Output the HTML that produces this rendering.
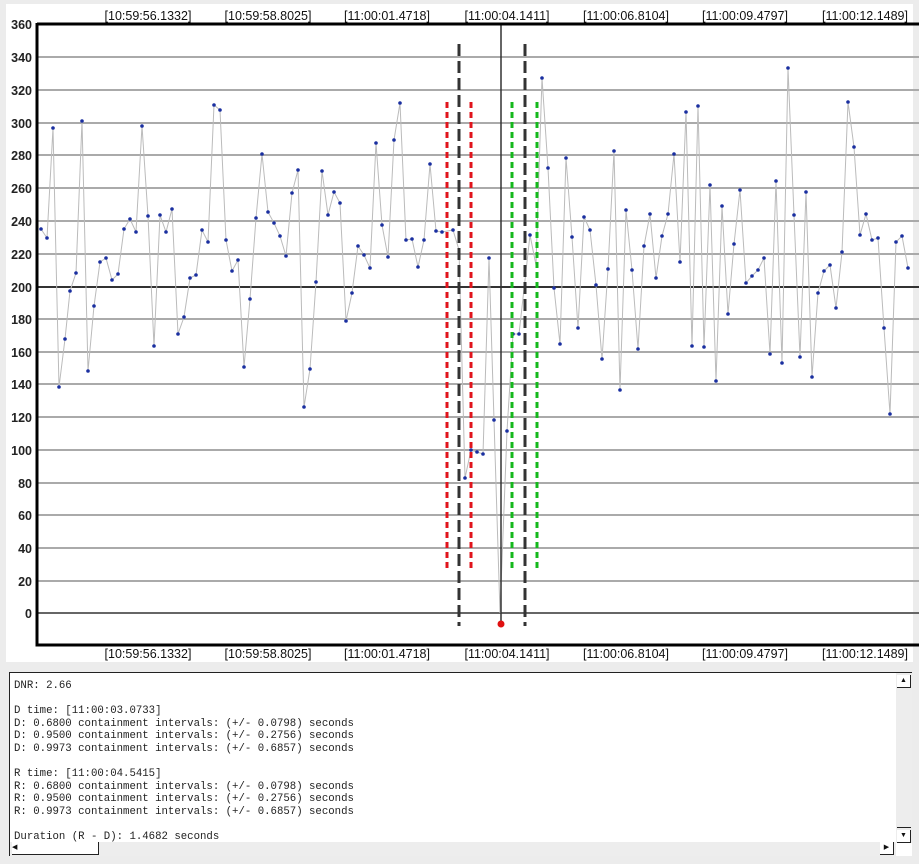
<!DOCTYPE html>
<html><head><meta charset="utf-8"><style>
body{margin:0;width:919px;height:864px;background:#ececec;overflow:hidden;position:relative;font-family:"Liberation Sans",sans-serif}
#chart{position:absolute;left:0;top:0}
#panel{position:absolute;left:9px;top:672px;width:903px;height:184px;background:#fff;border-top:1.5px solid #222;border-left:1.5px solid #222;box-sizing:border-box}
#txt{position:absolute;left:4px;top:7px;font-family:"Liberation Mono",monospace;font-size:10.7px;line-height:12.6px;white-space:pre;color:#222}
.vs{position:absolute;right:0;top:0;width:16px;height:170px;background:#ededed}
.hs{position:absolute;left:0;bottom:0;width:886px;height:14px;background:#ededed}
.btn{position:absolute;width:13px;height:12px;background:#fff;border-right:1.5px solid #222;border-bottom:1.5px solid #222;font-size:7px;line-height:12px;text-align:center;color:#111}
</style></head><body>
<svg id="chart" width="919" height="664" xmlns="http://www.w3.org/2000/svg">
<rect x="6" y="4" width="907" height="658" fill="#fff"/>
<g stroke="#aaa" stroke-width="2">
<line x1="37" x2="919" y1="57" y2="57"/><line x1="37" x2="919" y1="90" y2="90"/><line x1="37" x2="919" y1="123" y2="123"/><line x1="37" x2="919" y1="155" y2="155"/><line x1="37" x2="919" y1="188" y2="188"/><line x1="37" x2="919" y1="221" y2="221"/><line x1="37" x2="919" y1="254" y2="254"/><line x1="37" x2="919" y1="319" y2="319"/><line x1="37" x2="919" y1="352" y2="352"/><line x1="37" x2="919" y1="384" y2="384"/><line x1="37" x2="919" y1="417" y2="417"/><line x1="37" x2="919" y1="450" y2="450"/><line x1="37" x2="919" y1="483" y2="483"/><line x1="37" x2="919" y1="515" y2="515"/><line x1="37" x2="919" y1="548" y2="548"/><line x1="37" x2="919" y1="581" y2="581"/>
</g>
<line x1="37" x2="919" y1="287" y2="287" stroke="#333" stroke-width="2"/>
<line x1="37" x2="919" y1="613" y2="613" stroke="#666" stroke-width="2"/>
<polyline fill="none" stroke="#bbb" stroke-width="1" points="41,229 47,238 53,128 59,387 65,339 70,291 76,273 82,121 88,371 94,306 100,262 106,258 112,280 118,274 124,229 130,219 136,232 142,126 148,216 154,346 160,215 166,232 172,209 178,334 184,317 190,278 196,275 202,230 208,242 214,105 220,110 226,240 232,271 238,260 244,367 250,299 256,218 262,154 268,212 274,223 280,236 286,256 292,193 298,170 304,407 310,369 316,282 322,171 328,215 334,192 340,203 346,321 352,293 358,246 364,255 370,268 376,143 382,225 388,257 394,140 400,103 406,240 412,239 418,267 424,240 430,164 436,231 442,232 453,230 459,250 465,478 471,450 477,452 483,454 489,258 494,420 500,613 507,431 513,334 519,334 530,235 536,265 542,78 548,168 554,288 560,344 566,158 572,237 578,328 584,217 590,230 596,285 602,359 608,269 614,151 620,390 626,210 632,270 638,349 644,246 650,214 656,278 662,236 668,214 674,154 680,262 686,112 692,346 698,106 704,347 710,185 716,381 722,206 728,314 734,244 740,190 746,283 752,276 758,270 764,258 770,354 776,181 782,363 788,68 794,215 800,357 806,192 812,377 818,293 824,271 830,265 836,308 842,252 848,102 854,147 860,235 866,214 872,240 878,238 884,328 890,414 896,242 902,236 908,268"/>
<g fill="#1a2fa0">
<circle cx="41" cy="229" r="1.8"/><circle cx="47" cy="238" r="1.8"/><circle cx="53" cy="128" r="1.8"/><circle cx="59" cy="387" r="1.8"/><circle cx="65" cy="339" r="1.8"/><circle cx="70" cy="291" r="1.8"/><circle cx="76" cy="273" r="1.8"/><circle cx="82" cy="121" r="1.8"/><circle cx="88" cy="371" r="1.8"/><circle cx="94" cy="306" r="1.8"/><circle cx="100" cy="262" r="1.8"/><circle cx="106" cy="258" r="1.8"/><circle cx="112" cy="280" r="1.8"/><circle cx="118" cy="274" r="1.8"/><circle cx="124" cy="229" r="1.8"/><circle cx="130" cy="219" r="1.8"/><circle cx="136" cy="232" r="1.8"/><circle cx="142" cy="126" r="1.8"/><circle cx="148" cy="216" r="1.8"/><circle cx="154" cy="346" r="1.8"/><circle cx="160" cy="215" r="1.8"/><circle cx="166" cy="232" r="1.8"/><circle cx="172" cy="209" r="1.8"/><circle cx="178" cy="334" r="1.8"/><circle cx="184" cy="317" r="1.8"/><circle cx="190" cy="278" r="1.8"/><circle cx="196" cy="275" r="1.8"/><circle cx="202" cy="230" r="1.8"/><circle cx="208" cy="242" r="1.8"/><circle cx="214" cy="105" r="1.8"/><circle cx="220" cy="110" r="1.8"/><circle cx="226" cy="240" r="1.8"/><circle cx="232" cy="271" r="1.8"/><circle cx="238" cy="260" r="1.8"/><circle cx="244" cy="367" r="1.8"/><circle cx="250" cy="299" r="1.8"/><circle cx="256" cy="218" r="1.8"/><circle cx="262" cy="154" r="1.8"/><circle cx="268" cy="212" r="1.8"/><circle cx="274" cy="223" r="1.8"/><circle cx="280" cy="236" r="1.8"/><circle cx="286" cy="256" r="1.8"/><circle cx="292" cy="193" r="1.8"/><circle cx="298" cy="170" r="1.8"/><circle cx="304" cy="407" r="1.8"/><circle cx="310" cy="369" r="1.8"/><circle cx="316" cy="282" r="1.8"/><circle cx="322" cy="171" r="1.8"/><circle cx="328" cy="215" r="1.8"/><circle cx="334" cy="192" r="1.8"/><circle cx="340" cy="203" r="1.8"/><circle cx="346" cy="321" r="1.8"/><circle cx="352" cy="293" r="1.8"/><circle cx="358" cy="246" r="1.8"/><circle cx="364" cy="255" r="1.8"/><circle cx="370" cy="268" r="1.8"/><circle cx="376" cy="143" r="1.8"/><circle cx="382" cy="225" r="1.8"/><circle cx="388" cy="257" r="1.8"/><circle cx="394" cy="140" r="1.8"/><circle cx="400" cy="103" r="1.8"/><circle cx="406" cy="240" r="1.8"/><circle cx="412" cy="239" r="1.8"/><circle cx="418" cy="267" r="1.8"/><circle cx="424" cy="240" r="1.8"/><circle cx="430" cy="164" r="1.8"/><circle cx="436" cy="231" r="1.8"/><circle cx="442" cy="232" r="1.8"/><circle cx="453" cy="230" r="1.8"/><circle cx="465" cy="478" r="1.8"/><circle cx="471" cy="450" r="1.8"/><circle cx="477" cy="452" r="1.8"/><circle cx="483" cy="454" r="1.8"/><circle cx="489" cy="258" r="1.8"/><circle cx="494" cy="420" r="1.8"/><circle cx="507" cy="431" r="1.8"/><circle cx="513" cy="334" r="1.8"/><circle cx="519" cy="334" r="1.8"/><circle cx="530" cy="235" r="1.8"/><circle cx="542" cy="78" r="1.8"/><circle cx="548" cy="168" r="1.8"/><circle cx="554" cy="288" r="1.8"/><circle cx="560" cy="344" r="1.8"/><circle cx="566" cy="158" r="1.8"/><circle cx="572" cy="237" r="1.8"/><circle cx="578" cy="328" r="1.8"/><circle cx="584" cy="217" r="1.8"/><circle cx="590" cy="230" r="1.8"/><circle cx="596" cy="285" r="1.8"/><circle cx="602" cy="359" r="1.8"/><circle cx="608" cy="269" r="1.8"/><circle cx="614" cy="151" r="1.8"/><circle cx="620" cy="390" r="1.8"/><circle cx="626" cy="210" r="1.8"/><circle cx="632" cy="270" r="1.8"/><circle cx="638" cy="349" r="1.8"/><circle cx="644" cy="246" r="1.8"/><circle cx="650" cy="214" r="1.8"/><circle cx="656" cy="278" r="1.8"/><circle cx="662" cy="236" r="1.8"/><circle cx="668" cy="214" r="1.8"/><circle cx="674" cy="154" r="1.8"/><circle cx="680" cy="262" r="1.8"/><circle cx="686" cy="112" r="1.8"/><circle cx="692" cy="346" r="1.8"/><circle cx="698" cy="106" r="1.8"/><circle cx="704" cy="347" r="1.8"/><circle cx="710" cy="185" r="1.8"/><circle cx="716" cy="381" r="1.8"/><circle cx="722" cy="206" r="1.8"/><circle cx="728" cy="314" r="1.8"/><circle cx="734" cy="244" r="1.8"/><circle cx="740" cy="190" r="1.8"/><circle cx="746" cy="283" r="1.8"/><circle cx="752" cy="276" r="1.8"/><circle cx="758" cy="270" r="1.8"/><circle cx="764" cy="258" r="1.8"/><circle cx="770" cy="354" r="1.8"/><circle cx="776" cy="181" r="1.8"/><circle cx="782" cy="363" r="1.8"/><circle cx="788" cy="68" r="1.8"/><circle cx="794" cy="215" r="1.8"/><circle cx="800" cy="357" r="1.8"/><circle cx="806" cy="192" r="1.8"/><circle cx="812" cy="377" r="1.8"/><circle cx="818" cy="293" r="1.8"/><circle cx="824" cy="271" r="1.8"/><circle cx="830" cy="265" r="1.8"/><circle cx="836" cy="308" r="1.8"/><circle cx="842" cy="252" r="1.8"/><circle cx="848" cy="102" r="1.8"/><circle cx="854" cy="147" r="1.8"/><circle cx="860" cy="235" r="1.8"/><circle cx="866" cy="214" r="1.8"/><circle cx="872" cy="240" r="1.8"/><circle cx="878" cy="238" r="1.8"/><circle cx="884" cy="328" r="1.8"/><circle cx="890" cy="414" r="1.8"/><circle cx="896" cy="242" r="1.8"/><circle cx="902" cy="236" r="1.8"/><circle cx="908" cy="268" r="1.8"/>
</g>
<line x1="501" y1="24" x2="501" y2="624" stroke="#333" stroke-width="1.5"/>
<g stroke-width="3" stroke-dasharray="6,4">
<line x1="447" y1="102" x2="447" y2="568" stroke="#e0141c"/>
<line x1="471" y1="102" x2="471" y2="568" stroke="#e0141c"/>
<line x1="512" y1="102" x2="512" y2="568" stroke="#14b81c"/>
<line x1="537" y1="102" x2="537" y2="568" stroke="#14b81c"/>
</g>
<g stroke="#333" stroke-width="3" stroke-dasharray="12,5">
<line x1="459" y1="44" x2="459" y2="626"/>
<line x1="525" y1="44" x2="525" y2="626"/>
</g>
<circle cx="501" cy="624" r="3.5" fill="#e01010"/>
<path d="M37 24 H919 M37 23 V645 H919" stroke="#000" stroke-width="3" fill="none"/>
<g font-size="12.5" fill="#111" text-anchor="middle">
<text x="148" y="20">[10:59:56.1332]</text><text x="268" y="20">[10:59:58.8025]</text><text x="387" y="20">[11:00:01.4718]</text><text x="507" y="20">[11:00:04.1411]</text><text x="626" y="20">[11:00:06.8104]</text><text x="745" y="20">[11:00:09.4797]</text><text x="865" y="20">[11:00:12.1489]</text>
<text x="148" y="658">[10:59:56.1332]</text><text x="268" y="658">[10:59:58.8025]</text><text x="387" y="658">[11:00:01.4718]</text><text x="507" y="658">[11:00:04.1411]</text><text x="626" y="658">[11:00:06.8104]</text><text x="745" y="658">[11:00:09.4797]</text><text x="865" y="658">[11:00:12.1489]</text>
</g>
<g font-size="12.5" font-weight="bold" fill="#222" text-anchor="end">
<text x="32" y="29">360</text><text x="32" y="62">340</text><text x="32" y="95">320</text><text x="32" y="128">300</text><text x="32" y="160">280</text><text x="32" y="193">260</text><text x="32" y="226">240</text><text x="32" y="259">220</text><text x="32" y="292">200</text><text x="32" y="324">180</text><text x="32" y="357">160</text><text x="32" y="389">140</text><text x="32" y="422">120</text><text x="32" y="455">100</text><text x="32" y="488">80</text><text x="32" y="520">60</text><text x="32" y="553">40</text><text x="32" y="586">20</text><text x="32" y="618">0</text>
</g>
</svg>
<div id="panel">
<div id="txt">DNR: 2.66

D time: [11:00:03.0733]
D: 0.6800 containment intervals: (+/- 0.0798) seconds
D: 0.9500 containment intervals: (+/- 0.2756) seconds
D: 0.9973 containment intervals: (+/- 0.6857) seconds

R time: [11:00:04.5415]
R: 0.6800 containment intervals: (+/- 0.0798) seconds
R: 0.9500 containment intervals: (+/- 0.2756) seconds
R: 0.9973 containment intervals: (+/- 0.6857) seconds

Duration (R - D): 1.4682 seconds</div>
<div class="vs">
<div class="btn" style="left:1px;top:2px">▲</div>
<div class="btn" style="left:1px;top:154px;height:0;border-bottom:1.5px solid #222"></div>
<div class="btn" style="left:1px;top:157px">▼</div>
</div>
<div class="hs">
<div class="btn" style="left:2px;top:0;width:86px;text-align:left">◀</div>
<div class="btn" style="left:870px;top:0">▶</div>
</div>
</div>
</body></html>
